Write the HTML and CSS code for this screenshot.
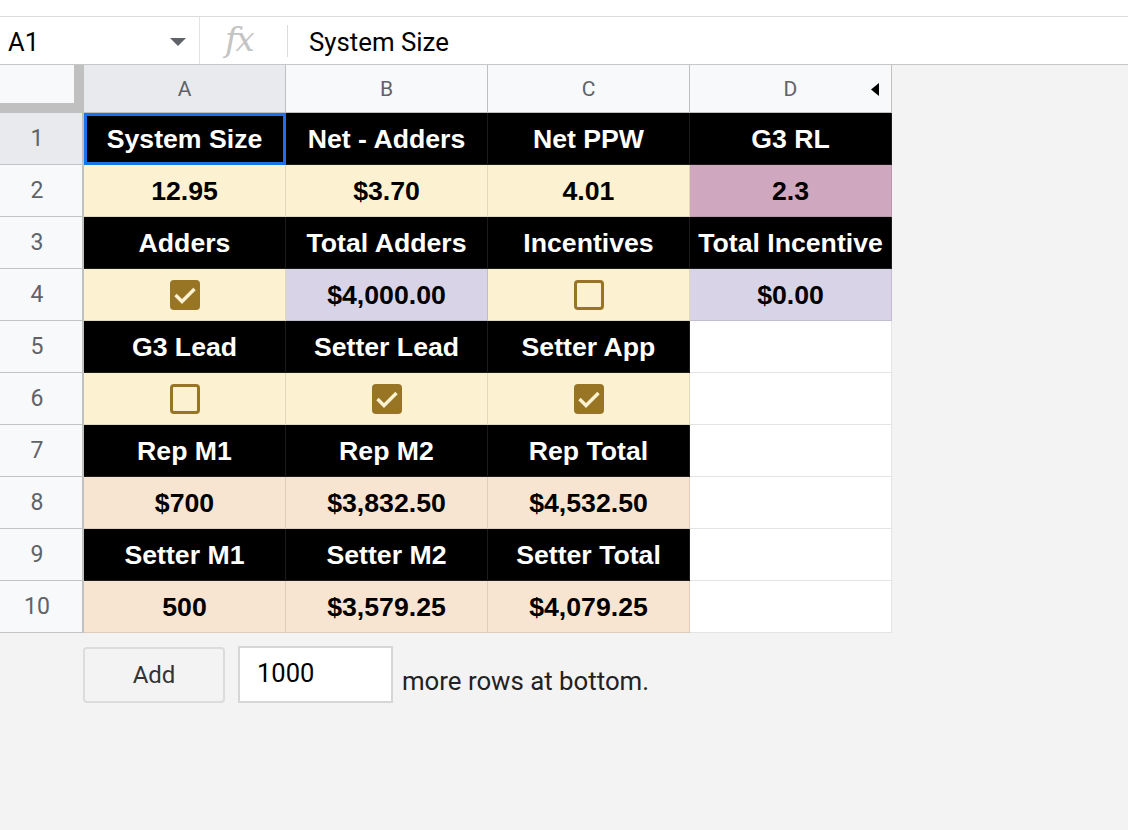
FILE: index.html
```html
<!DOCTYPE html>
<html>
<head>
<meta charset="utf-8">
<link rel="stylesheet" href="styles.css">
</head>
<body>
<div class="topbar"></div>
<div class="fbar">
  <div class="namebox">
    <span class="ref">A1</span>
    <svg class="caret" width="16" height="8" viewBox="0 0 16 8"><path d="M0 0 L16 0 L8 8 Z" fill="#5f6368"/></svg>
  </div>
  <div class="fx">fx</div>
  <div class="fsep"></div>
  <div class="fcontent">System Size</div>
</div>
<div class="sheet">
  <div class="grid">
    <div class="corner"></div>
    <div class="ch sel">A</div>
    <div class="ch">B</div>
    <div class="ch">C</div>
    <div class="ch chd">D<svg class="dtri" width="8" height="13" viewBox="0 0 8 13"><path d="M8 0 L8 13 L0 6.5 Z" fill="#000"/></svg></div>

    <div class="rh sel">1</div>
    <div class="c k a1">System Size</div>
    <div class="c k">Net - Adders</div>
    <div class="c k">Net PPW</div>
    <div class="c k">G3 RL</div>

    <div class="rh">2</div>
    <div class="c y">12.95</div>
    <div class="c y">$3.70</div>
    <div class="c y">4.01</div>
    <div class="c m">2.3</div>

    <div class="rh">3</div>
    <div class="c k">Adders</div>
    <div class="c k">Total Adders</div>
    <div class="c k">Incentives</div>
    <div class="c k">Total Incentive</div>

    <div class="rh">4</div>
    <div class="c y"><span class="cb on"><svg width="30" height="30" viewBox="0 0 30 30"><path d="M5.5 15 L12 21.5 L24.5 9" fill="none" stroke="#fcf1d0" stroke-width="3.4"/></svg></span></div>
    <div class="c p">$4,000.00</div>
    <div class="c y"><span class="cb"></span></div>
    <div class="c p">$0.00</div>

    <div class="rh">5</div>
    <div class="c k">G3 Lead</div>
    <div class="c k">Setter Lead</div>
    <div class="c k">Setter App</div>
    <div class="c w"></div>

    <div class="rh">6</div>
    <div class="c y"><span class="cb"></span></div>
    <div class="c y"><span class="cb on"><svg width="30" height="30" viewBox="0 0 30 30"><path d="M5.5 15 L12 21.5 L24.5 9" fill="none" stroke="#fcf1d0" stroke-width="3.4"/></svg></span></div>
    <div class="c y"><span class="cb on"><svg width="30" height="30" viewBox="0 0 30 30"><path d="M5.5 15 L12 21.5 L24.5 9" fill="none" stroke="#fcf1d0" stroke-width="3.4"/></svg></span></div>
    <div class="c w"></div>

    <div class="rh">7</div>
    <div class="c k">Rep M1</div>
    <div class="c k">Rep M2</div>
    <div class="c k">Rep Total</div>
    <div class="c w"></div>

    <div class="rh">8</div>
    <div class="c o">$700</div>
    <div class="c o">$3,832.50</div>
    <div class="c o">$4,532.50</div>
    <div class="c w"></div>

    <div class="rh">9</div>
    <div class="c k">Setter M1</div>
    <div class="c k">Setter M2</div>
    <div class="c k">Setter Total</div>
    <div class="c w"></div>

    <div class="rh">10</div>
    <div class="c o">500</div>
    <div class="c o">$3,579.25</div>
    <div class="c o">$4,079.25</div>
    <div class="c w"></div>
  </div>
  <div class="addrow">
    <button class="addbtn">Add</button>
    <input class="addin" type="text" value="1000">
    <span class="addtxt">more rows at bottom.</span>
  </div>
</div>
</body>
</html>
```

FILE: styles.css
```css
* { box-sizing: border-box; }
html, body { margin: 0; padding: 0; }
body {
  background: #f3f3f3;
  font-family: "Liberation Sans", Arial, sans-serif;
  width: 1128px;
  height: 830px;
  overflow: hidden;
}
.topbar {
  height: 17px;
  background: #fff;
  border-bottom: 1px solid #dadce0;
}
.fbar {
  height: 48px;
  background: #fff;
  border-bottom: 1px solid #c7c7c7;
  display: flex;
  align-items: center;
}
.namebox {
  width: 200px;
  height: 100%;
  display: flex;
  align-items: center;
  padding-left: 8px;
  padding-right: 13px;
  border-right: 1px solid #e3e3e3;
  margin: 0;
}
.ref {
  font-family: Roboto, "Liberation Sans", sans-serif;
  font-size: 25.5px;
  color: #000;
  flex: 1;
  margin-top: 2px;
}
.caret { margin-top: 3px; }
.fx {
  width: 87px;
  padding-left: 25px;
  font-family: "DejaVu Serif", "Liberation Serif", serif;
  font-style: italic;
  font-size: 34px;
  color: #c4c4c4;
  letter-spacing: -2px;
  line-height: 1;
  margin-top: -4px;
}
.fsep {
  width: 1px;
  height: 32px;
  background: #dadce0;
}
.fcontent {
  padding-left: 21px;
  font-family: Roboto, "Liberation Sans", sans-serif;
  font-size: 25.8px;
  color: #000;
  margin-top: 2px;
}
.grid {
  display: grid;
  grid-template-columns: 84px repeat(4, 202px);
  grid-template-rows: 48px repeat(10, 52px);
  width: 892px;
}
.corner {
  background: #f8f9fa;
  border-right: 10px solid #c0c0c0;
  border-bottom: 10px solid #c0c0c0;
}
.ch {
  background: #f8f9fa;
  border-right: 1px solid #c0c0c0;
  border-bottom: 1px solid #c0c0c0;
  display: flex;
  align-items: center;
  justify-content: center;
  font-family: Roboto, "Liberation Sans", sans-serif;
  font-size: 21px;
  color: #5f6368;
  position: relative;
}
.ch.sel { background: #e8eaed; }
.chd .dtri {
  position: absolute;
  right: 12px;
  top: 18px;
}
.rh {
  background: #f8f9fa;
  border-right: 2px solid #c0c0c0;
  border-bottom: 1px solid #c4c4c4;
  display: flex;
  align-items: center;
  justify-content: center;
  padding-right: 8px;
  font-family: Roboto, "Liberation Sans", sans-serif;
  font-size: 23px;
  color: #5f6368;
}
.rh.sel { background: #e8eaed; }
.c {
  border-right: 1px solid rgba(0,0,0,0.1);
  border-bottom: 1px solid rgba(0,0,0,0.1);
  display: flex;
  align-items: center;
  justify-content: center;
  font-family: "Liberation Sans", Arial, sans-serif;
  font-weight: bold;
  font-size: 26.67px;
  color: #000;
  padding-top: 1px;
}
.c.k { background: #000; color: #fff; border-color: #1c1c1c; }
.c.y { background: #fcf1d0; }
.c.p { background: #d8d3e6; }
.c.m { background: #cfa7be; }
.c.o { background: #f7e5d2; }
.c.w { background: #fff; border-color: #e2e3e3; }
.c.a1 {
  outline: 3px solid #1a73e8;
  outline-offset: -3px;
}
.cb {
  width: 30px;
  height: 30px;
  border-radius: 4px;
  border: 3.5px solid #987425;
  display: block;
}
.cb.on {
  background: #987425;
  border: none;
}
.cb svg { display: block; }
.addrow {
  display: flex;
  align-items: center;
  padding-left: 83px;
  margin-top: 13px;
}
.addbtn {
  width: 142px;
  height: 56px;
  background: #f3f3f3;
  border: 2px solid #dcdcdc;
  border-radius: 4px;
  font-family: Roboto, "Liberation Sans", sans-serif;
  font-size: 24px;
  color: #333;
  padding: 0;
  margin: 0 13px 0 0;
}
.addin {
  width: 155px;
  height: 57px;
  border: 2px solid #d6d6d6;
  background: #fff;
  font-family: Roboto, "Liberation Sans", sans-serif;
  font-size: 25.5px;
  color: #000;
  padding: 0 0 3px 17px;
  margin: 0 9px 0 0;
  outline: none;
}
.addtxt {
  font-family: Roboto, "Liberation Sans", sans-serif;
  font-size: 25.8px;
  color: #222;
  margin-top: 12px;
}
```
